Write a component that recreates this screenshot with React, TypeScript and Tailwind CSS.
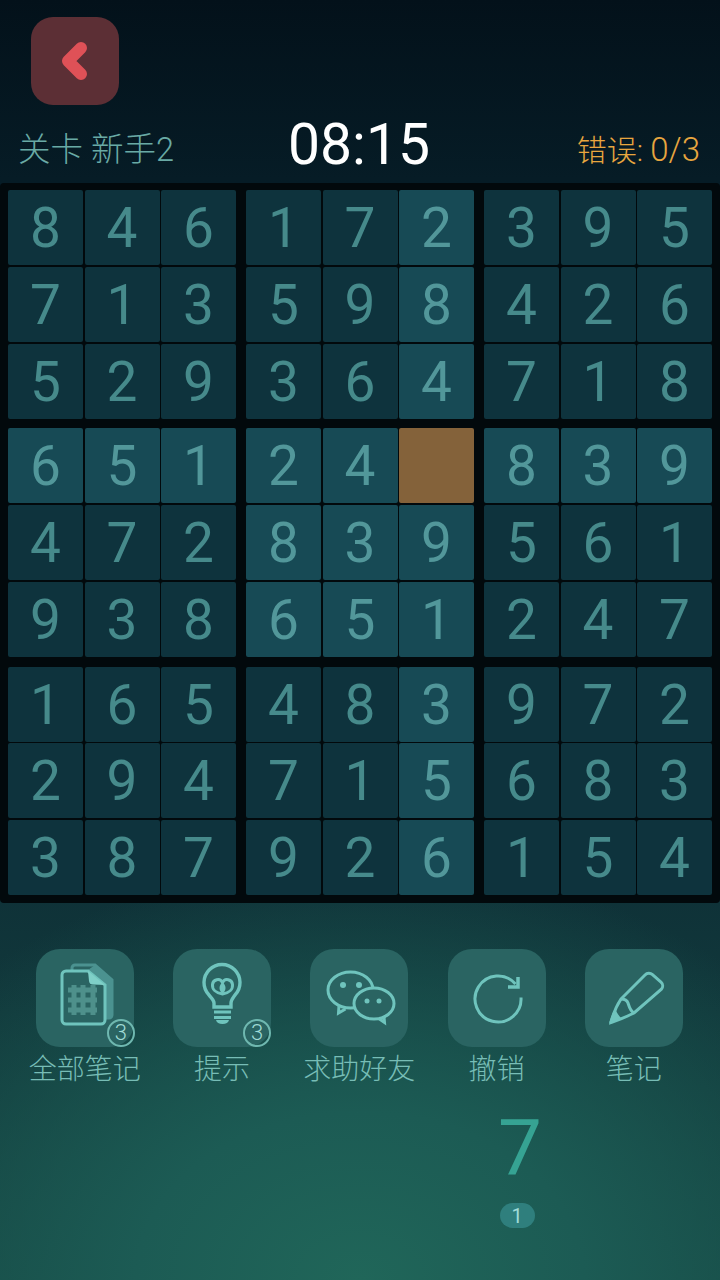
const BOARD = [
  "846172395",
  "713598426",
  "529364718",
  "651240839",
  "472839561",
  "938651247",
  "165483972",
  "294715683",
  "387926154",
];

function cellClass(row: number, col: number) {
  if (row === 3 && col === 5) return "bg-[#84623a]";
  const sameBlock = row >= 3 && row <= 5 && col >= 3 && col <= 5;
  if (row === 3 || col === 5 || sameBlock) return "bg-[#174a55] text-[#52979a]";
  return "bg-[#0e333d] text-[#468a8b]";
}

function Block({ top, left }: { top: number; left: number }) {
  const cells = [];
  for (let r = top; r < top + 3; r++) {
    for (let c = left; c < left + 3; c++) {
      const value = BOARD[r][c];
      cells.push(
        <div
          key={`${r}-${c}`}
          className={`flex items-center justify-center rounded-[2px] pt-[2px] text-[55px] leading-none font-normal ${cellClass(r, c)}`}
        >
          {r === 3 && c === 5 ? "" : value}
        </div>
      );
    }
  }
  return (
    <div className="grid grid-cols-[75px_75px_75px] grid-rows-[75px_75px_75px] content-between justify-between">
      {cells}
    </div>
  );
}

function NotesIcon() {
  return (
    <svg viewBox="0 0 98 98" className="h-full w-full" fill="none">
      <path d="M36 21v-2a3 3 0 0 1 3-3h20l17 15v35a3 3 0 0 1-3 3h-4" stroke="#4b9290" strokeWidth="3" />
      <path d="M59 16l17 15v38h-7V36L52 21z" fill="#4b9290" />
      <path d="M30 22h22l17 14v35a4 4 0 0 1-4 4H30a4 4 0 0 1-4-4V26a4 4 0 0 1 4-4z" fill="#2a6462" stroke="#6fc4bd" strokeWidth="3" />
      <path d="M52 22l17 14-12-.5a4 4 0 0 1-4-3.500z" fill="#7fd0c8" />
      <g stroke="#6db5ae" strokeWidth="5" opacity=".55">
        <path d="M38 36v30" />
        <path d="M47 36v30" />
        <path d="M57 36v30" />
        <path d="M32 41h29" />
        <path d="M32 51h29" />
        <path d="M32 61h29" />
      </g>
    </svg>
  );
}

function BulbIcon() {
  return (
    <svg viewBox="0 0 98 98" className="h-full w-full" fill="none" stroke="#6fc4bd" strokeWidth="3.400">
      <path d="M41 58v-4c0-3-3-5-5-8a18 18 0 1 1 26 0c-2 3-4 5-4 8v4z" />
      <path d="M49.500 45c-7-1-10.500-5-10-9.500 .5-5 7.500-7 10-2 2.500-5 9.500-3 10 2 .5 4.500-3 8.500-10 9.500z" strokeWidth="3" />
      <path d="M49.500 33c-4 4-4 8 0 12 4-4 4-8 0-12z" fill="#6fc4bd" stroke="none" />
      <path d="M41 63h17" strokeWidth="3" />
      <path d="M41 68.500h17" strokeWidth="3" />
      <path d="M43 71h13c-.5 2.500-3 4-6.500 4s-6-1.500-6.500-4z" fill="#6fc4bd" stroke="none" />
    </svg>
  );
}

function ChatIcon() {
  return (
    <svg viewBox="0 0 98 98" className="h-full w-full" fill="none" stroke="#6fc4bd" strokeWidth="3">
      <path d="M29 56.500l-.5 7.500 7-4" fill="#2a6462" />
      <ellipse cx="40.500" cy="41" rx="22.500" ry="18" fill="#2a6462" />
      <path d="M68 69l6.500 4.500-.5-6" fill="#2a6462" />
      <ellipse cx="64" cy="54.500" rx="20" ry="15.500" fill="#2a6462" />
      <circle cx="33" cy="36" r="3" fill="#6fc4bd" stroke="none" />
      <circle cx="49" cy="36" r="3" fill="#6fc4bd" stroke="none" />
      <circle cx="57" cy="52" r="2.500" fill="#6fc4bd" stroke="none" />
      <circle cx="69" cy="52" r="2.500" fill="#6fc4bd" stroke="none" />
    </svg>
  );
}

function RedoIcon() {
  return (
    <svg viewBox="0 0 98 98" className="h-full w-full" fill="none" stroke="#6fc4bd" strokeWidth="3">
      <path d="M73 48.500A23 23 0 1 1 67.500 35" />
      <path d="M60 38h10V28" strokeWidth="3.500" />
    </svg>
  );
}

function PencilIcon() {
  return (
    <svg viewBox="0 0 98 98" className="h-full w-full" fill="none" stroke="#6fc4bd" strokeWidth="3">
      <path d="M36 50l24-24a5.500 5.500 0 0 1 7.500-.3l8.500 7.500a5 5 0 0 1 .4 7L49 64c-6 3-17 7.500-23 9.500 1.500-6 6-17.500 10-23.500z" />
      <path d="M36 50c4 0 6 1 7 4s2 8 6 10" />
      <path d="M30 60c2 4 4 7 6 9l-12 5c1.500-5 3.500-10 6-14z" fill="#6fc4bd" stroke="none" />
    </svg>
  );
}

const ACTIONS = [
  { label: "全部笔记", icon: <NotesIcon />, count: 3, badge: "-right-px" },
  { label: "提示", icon: <BulbIcon />, count: 3, badge: "right-0" },
  { label: "求助好友", icon: <ChatIcon /> },
  { label: "撤销", icon: <RedoIcon /> },
  { label: "笔记", icon: <PencilIcon /> },
];

export default function App() {
  return (
    <div className="flex h-[1280px] w-[720px] flex-col overflow-hidden bg-[radial-gradient(ellipse_560px_420px_at_50%_100%,#206659_0%,#1c5b54_40%,rgba(22,70,70,0)_100%),linear-gradient(180deg,#03111a_0%,#061c26_14%,#0f3238_70%,#154642_100%)] font-['Roboto','Noto_Sans_CJK_SC',sans-serif]">
      {/* Top bar */}
      <div className="pl-[31px] pt-[17px]">
        <button className="flex h-[88px] w-[88px] items-center justify-center rounded-[22px] bg-[#5c2f35]">
          <svg viewBox="0 0 88 88" className="h-[88px] w-[88px]" fill="none" stroke="#df5157" strokeWidth="12" strokeLinecap="round" strokeLinejoin="round">
            <path d="M50 31L37 44l13 13" />
          </svg>
        </button>
      </div>
      <div className="flex h-[78px] items-center justify-between px-[20px]">
        <span className="-ml-[2px] mt-[12px] w-[200px] text-[32.5px] font-light text-[#69aaa5]">关卡 新手2</span>
        <span className="text-[57px] leading-none text-white">08:15</span>
        <span className="mt-[12px] w-[200px] text-right text-[30px] font-light text-[#e8a63f]">
          错误: <span className="text-[33px]">0/3</span>
        </span>
      </div>

      {/* Board */}
      <div className="grid h-[720px] grid-cols-3 grid-rows-[229px_229px_228px] gap-x-[10px] gap-y-[9.4px] rounded-[4px] bg-[#02090c] px-[8px] pt-[7px]">
        {[0, 3, 6].map((top) =>
          [0, 3, 6].map((left) => <Block key={`${top}-${left}`} top={top} left={left} />)
        )}
      </div>

      {/* Tools */}
      <div className="grid grid-cols-5 pl-[16.2px] pr-[17.55px] pt-[46px]">
        {ACTIONS.map((action) => (
          <div key={action.label} className="flex flex-col items-center">
            <div className="relative h-[98px] w-[98px] rounded-[24px] bg-[#2a6462]">
              {action.icon}
              {action.count && (
                <span className={`absolute bottom-0 flex h-[28px] w-[28px] items-center justify-center rounded-full border-2 border-[#6fb8b0] text-[22px] leading-none font-light text-[#a0dcd6] ${action.badge}`}>
                  {action.count}
                </span>
              )}
            </div>
            <span className="mt-[2px] text-[28px] leading-[42px] font-light text-[#77bdb6]">{action.label}</span>
          </div>
        ))}
      </div>

      {/* Number pad */}
      <div className="grid grid-cols-9 pt-[13px]">
        <div className="col-start-7 flex flex-col items-center">
          <span className="text-[78px] leading-[90px] text-[#36a393]">7</span>
          <span className="mt-[9px] flex h-[25px] w-[35px] -translate-x-[3px] items-center justify-center rounded-full bg-[#2f7f7d] text-[20px] leading-none text-[#a0dcd8]">1</span>
        </div>
      </div>
    </div>
  );
}
